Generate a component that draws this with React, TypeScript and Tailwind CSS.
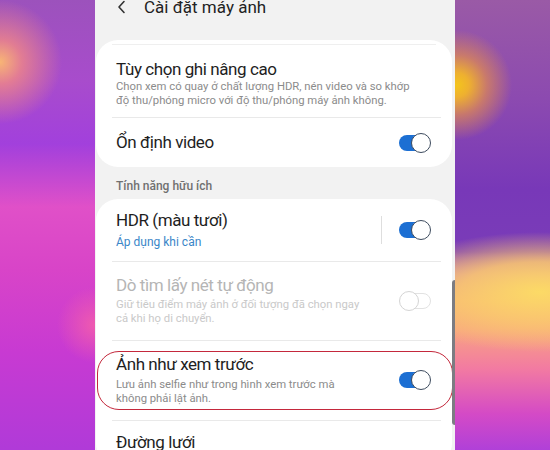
import React from "react";

const Toggle = ({ on = false }: { on?: boolean }) => {
  if (on) {
    return (
      <span className="relative block h-[20px] w-[32px] shrink-0">
        <span className="absolute left-0 top-[2px] h-[16px] w-[28px] rounded-full bg-[#1c6fd3]" />
        <span className="absolute right-0 top-0 h-[20px] w-[20px] rounded-full border-[1.5px] border-[#3d4b5e] bg-white" />
      </span>
    );
  }
  return (
    <span className="relative block h-[20px] w-[32px] shrink-0">
      <span className="absolute right-0 top-[2px] h-[16px] w-[30px] rounded-full border border-[#e2e2e2] bg-white" />
      <span className="absolute left-0 top-0 h-[20px] w-[20px] rounded-full border-[1.5px] border-[#d4d4d4] bg-white" />
    </span>
  );
};

const Divider = () => <div className="ml-[16px] mr-[11px] h-px bg-[#e9e9e9]" />;

const App = () => {
  return (
    <div className="flex h-[450px] w-[550px] overflow-hidden font-['Roboto',sans-serif]">
      {/* left wallpaper */}
      <div className="w-[95px] shrink-0 bg-[radial-gradient(circle_at_0px_62px,#f8b575_0px,rgba(246,140,130,0.75)_22px,transparent_62px),radial-gradient(circle_at_95px_325px,rgba(245,95,170,0.85)_0px,transparent_38px),linear-gradient(180deg,#9c52bc_0%,#a84ccc_18%,#a240dc_32%,#e050c8_46%,#d844c8_60%,#c83ad2_78%,#b03ad8_100%)]" />

      {/* phone screen */}
      <div className="relative w-[360px] shrink-0 overflow-hidden bg-[#f2f2f2]">
        <div className="-mt-[5px] flex h-[24px] items-center pl-[22px] text-[#222]">
          <svg width="10" height="14" viewBox="0 0 10 14" className="shrink-0">
            <polyline points="7,1.5 2,7 7,12.5" fill="none" stroke="#333" strokeWidth="1.6" strokeLinecap="round" strokeLinejoin="round" />
          </svg>
          <span className="ml-[17px] text-[17px] leading-[24px]">Cài đặt máy ảnh</span>
        </div>

        {/* card 1 */}
        <div className="ml-[1px] mr-[3px] mt-[21px] rounded-[22px] bg-white">
          <div className="mx-[16px] h-[5px] border-b border-[#efefef]" />
          <div className="pb-[9px] pl-[20px] pr-[21px] pt-[14px]">
            <div className="text-[17px] leading-[21px] tracking-[-0.025em] text-[#1e1e1e]">Tùy chọn ghi nâng cao</div>
            <div className="text-[11.3px] leading-[14px] text-[#8b8b8b]">
              <div>Chọn xem có quay ở chất lượng HDR, nén video và so khớp</div>
              <div>độ thu/phóng micro với độ thu/phóng máy ảnh không.</div>
            </div>
          </div>
          <Divider />
          <div className="flex h-[49px] items-center justify-between pl-[20px] pr-[21px]">
            <span className="text-[17px] leading-[21px] tracking-[-0.025em] text-[#1e1e1e]">Ổn định video</span>
            <Toggle on />
          </div>
        </div>

        <div className="mb-[5px] mt-[11px] pl-[21px] text-[12px] font-medium leading-[16px] text-[#707070]">Tính năng hữu ích</div>

        {/* card 2 */}
        <div className="ml-[1px] mr-[3px] rounded-[22px] bg-white">
          <div className="flex items-center pb-[11px] pl-[20px] pr-[21px] pt-[11px]">
            <div className="flex-1">
              <div className="text-[17px] leading-[21px] tracking-[-0.025em] text-[#1e1e1e]">HDR (màu tươi)</div>
              <div className="mt-[3px] text-[12px] leading-[16px] text-[#3a86c8]">Áp dụng khi cần</div>
            </div>
            <div className="mr-[17px] h-[28px] w-px bg-[#dedede]" />
            <Toggle on />
          </div>
          <Divider />
          <div className="flex items-center pb-[14px] pl-[20px] pr-[21px] pt-[13px]">
            <div className="flex-1">
              <div className="text-[17px] leading-[21px] tracking-[-0.025em] text-[#b5b5b5]">Dò tìm lấy nét tự động</div>
              <div className="mt-[2px] text-[11.3px] leading-[14px] text-[#c9c9c9]">
                <div>Giữ tiêu điểm máy ảnh ở đối tượng đã chọn ngay</div>
                <div>cả khi họ di chuyển.</div>
              </div>
            </div>
            <Toggle />
          </div>
          <Divider />
          <div className="relative flex items-center pb-[14px] pl-[20px] pr-[21px] pt-[13px]">
            <div className="flex-1">
              <div className="text-[17px] leading-[21px] tracking-[-0.025em] text-[#1e1e1e]">Ảnh như xem trước</div>
              <div className="mt-[3px] text-[11.3px] leading-[14px] text-[#8b8b8b]">
                <div>Lưu ảnh selfie như trong hình xem trước mà</div>
                <div>không phải lật ảnh.</div>
              </div>
            </div>
            <Toggle on />
            <div className="pointer-events-none absolute -right-[1px] bottom-[10px] left-[1px] top-[10px] rounded-[22px] border-[1.5px] border-[#c4283c]" />
          </div>
          <Divider />
          <div className="pb-[12px] pl-[20px] pr-[21px] pt-[11px]">
            <div className="text-[17px] leading-[21px] tracking-[-0.025em] text-[#1e1e1e]">Đường lưới</div>
          </div>
        </div>

        {/* scroll indicator */}
        <div className="absolute right-0 top-[280px] h-[145px] w-[3px] rounded-l-full bg-[#7c7c82]" />
      </div>

      {/* right wallpaper */}
      <div className="w-[95px] shrink-0 bg-[radial-gradient(circle_at_2px_85px,#f4c41c_0px,#eeb030_12px,rgba(225,140,80,0.7)_30px,transparent_55px),radial-gradient(ellipse_160px_60px_at_85px_292px,#fcda66_0%,rgba(250,200,110,0.85)_50%,transparent_100%),linear-gradient(180deg,#9a5aa6_0%,#8c4ab0_22%,#7838b8_42%,#7a3cb8_56%,#c87cb0_61%,#f6b07a_67%,#f8a482_73%,#f27aa2_82%,#d44ac6_92%,#b040d8_100%)]" />
    </div>
  );
};

export default App;
